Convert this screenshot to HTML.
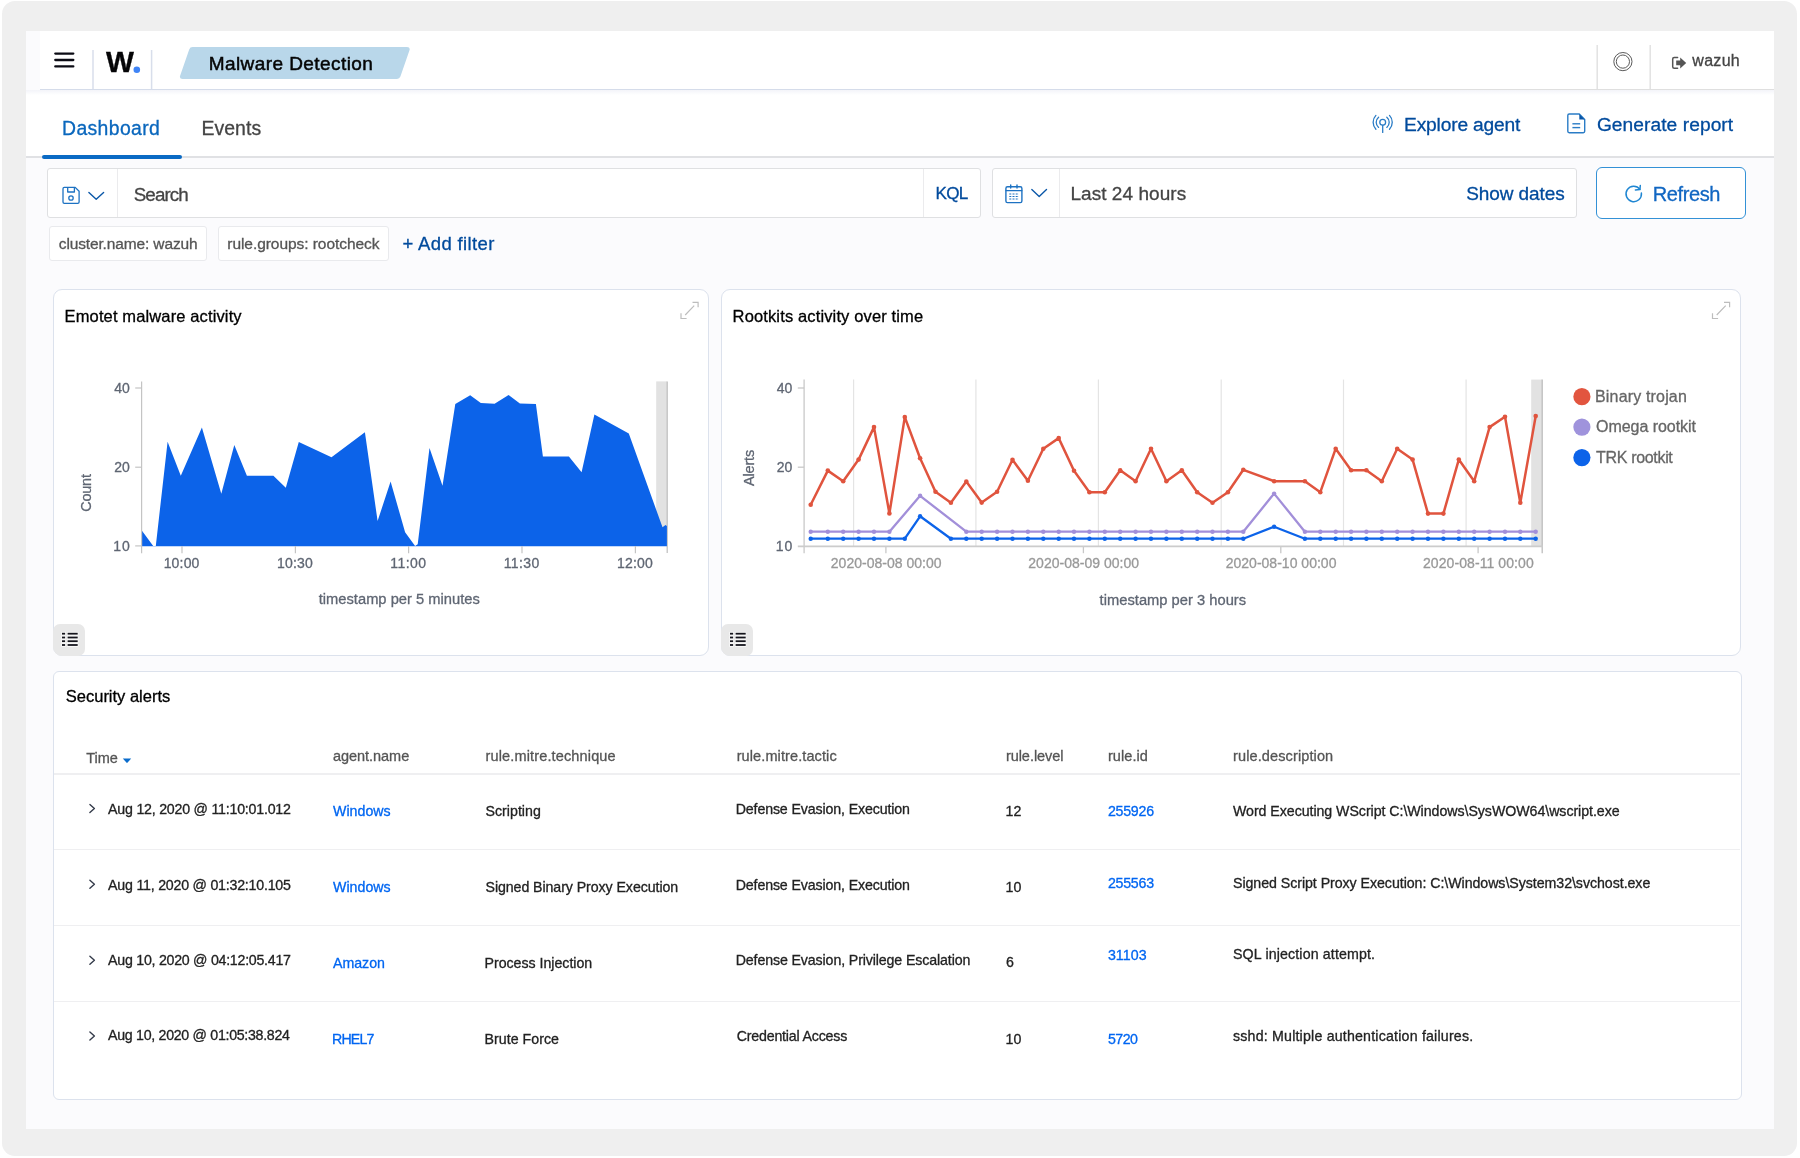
<!DOCTYPE html>
<html lang="en">
<head>
<meta charset="utf-8">
<title>Wazuh - Malware Detection</title>
<style>
*{box-sizing:border-box}
html,body{margin:0;padding:0;background:#fff}
body{width:1800px;height:1158px;overflow:hidden;font-family:"Liberation Sans",Arial,sans-serif;-webkit-font-smoothing:antialiased}
#root{position:relative;width:1800px;height:1158px;overflow:hidden;will-change:transform}
#root *{position:absolute}
#root header,#root nav,#root main,#root section,#root table,#root thead,#root tbody,#root tr,#root th,#root td,#root ul,#root li,#root button.plain,#root a.plain{position:static;display:block;margin:0;padding:0;border:0;background:none;font:inherit}
.t{white-space:pre;line-height:normal;margin:0;font-weight:400;-webkit-text-stroke:0.3px currentColor;font-family:"Liberation Sans",Arial,sans-serif}
svg{overflow:visible}
.frame{left:2px;top:1px;width:1795px;height:1155px;border-radius:13px;background:#efefef}
.page{left:26px;top:31.2px;width:1748px;height:1097.7px;background:#fbfbfd}
.hdr{left:40px;top:31.2px;width:1734px;height:58.8px;background:#fff}
.hdrline{left:40px;top:89px;width:1360px;height:1.2px;background:#d5dcea}
.hdrline2{left:1400px;top:89.2px;width:374px;height:1.6px;background:#dfdfdf}
.tabrow{left:26px;top:90.5px;width:1748px;height:67px;background:#fff}
.hshade{left:26px;top:90.2px;width:1748px;height:5px;background:linear-gradient(180deg,#f3f4f9,#ffffff)}
.tabline{left:26px;top:156.2px;width:1748px;height:1.8px;background:#e0e1e4}
.tabsel{left:42px;top:155.3px;width:140px;height:3.4px;border-radius:2px;background:#0a6ac4}
.box{background:#fff;border:1.2px solid #dfe0e2;border-radius:3px}
.vdiv{width:1.3px;background:#ebebed}
.pill{background:#fff;border:1.2px solid #e9eaed;border-radius:3px;top:226px;height:34.5px}
.btn{left:1596px;top:167px;width:150.2px;height:51.6px;background:#fff;border:1.6px solid #3391d6;border-radius:6px}
.panel{background:#fff;border:1.4px solid #dce2ed;border-radius:9px}
.lbtn{width:32px;height:32px;background:#e8e8e8;border-radius:7px 7px 7px 9px}
.rowline{left:54px;width:1686px;height:1.5px;background:#efeff1}
</style>
</head>
<body>
<div id="root">
<div class="frame"></div>
<div class="page"></div>

<header>
  <div class="hdr"></div>
  <div class="hdrline"></div>
  <div class="hdrline2"></div>
  <svg width="1800" height="100" style="left:0;top:0" viewBox="0 0 1800 100" aria-hidden="true">
    <g stroke="#0b0b14" stroke-width="2.3" stroke-linecap="round">
      <line x1="55.3" y1="53.6" x2="73.3" y2="53.6"/><line x1="55.3" y1="60" x2="73.3" y2="60"/><line x1="55.3" y1="66.4" x2="73.3" y2="66.4"/>
    </g>
    <g stroke="#d8deeb" stroke-width="1.5"><line x1="93" y1="50" x2="93" y2="89"/><line x1="151.6" y1="50" x2="151.6" y2="89"/></g>
    <circle cx="136.8" cy="69.8" r="3.3" fill="#3f84f6"/>
    <path d="M192.6 47 H407 Q410.6 47 409.4 50.4 L400.4 76.6 Q399.5 79 397 79 H182.6 Q179 79 180.2 75.6 L189.2 49.4 Q190 47 192.6 47 Z" fill="#b9d7ea"/>
    <g stroke="#e2e2e2" stroke-width="1.5"><line x1="1597.2" y1="45" x2="1597.2" y2="89"/><line x1="1650.2" y1="45" x2="1650.2" y2="89"/></g>
    <g fill="none" stroke="#5a5a5a" stroke-width="1"><circle cx="1622.9" cy="61.6" r="9.1"/><circle cx="1622.9" cy="61.6" r="6.6"/></g>
    <g fill="none" stroke="#555" stroke-width="1.5" stroke-linejoin="round" stroke-linecap="round">
      <path d="M1677.6 57.6 H1674.2 Q1672.7 57.6 1672.7 59.1 V66.7 Q1672.7 68.2 1674.2 68.2 H1677.6"/>
    </g>
    <path d="M1676.2 60.6 H1680.2 V57.4 L1686.2 62.9 L1680.2 68.4 V65.2 H1676.2 Z" fill="#555"/>
  </svg>
  <span class="t" style="font-size:29px;color:#050507;font-weight:700;left:106.10px;top:47.00px;transform:translateY(-0.6px) scaleX(1.02);transform-origin:0 50%;">W</span>
  <span class="t" style="font-size:19px;color:#050505;letter-spacing:0.425px;left:208.70px;top:53.00px;-webkit-text-stroke:0.5px #050505;">Malware Detection</span>
  <span class="t" style="font-size:16px;color:#444444;letter-spacing:0.300px;left:1692.30px;top:52.00px;">wazuh</span>
</header>

<nav>
  <div class="tabrow"></div>
  <div class="hshade"></div>
  <div class="tabline"></div>
  <div class="tabsel"></div>
  <a class="t" style="font-size:19.4px;color:#0a67bd;letter-spacing:0.375px;left:62.00px;top:117.00px;">Dashboard</a>
<a class="t" style="font-size:19.4px;color:#444444;letter-spacing:0.060px;left:201.50px;top:117.00px;">Events</a>
  <svg width="1800" height="60" style="left:0;top:100px" viewBox="0 100 1800 60" aria-hidden="true">
    <g fill="none" stroke="#2a7cc6" stroke-width="1.3" stroke-linecap="round">
      <circle cx="1382.7" cy="122.3" r="2.9"/>
      <line x1="1382.7" y1="125.3" x2="1382.7" y2="132.4"/>
      <path d="M1378.6 117.2 A6.6 6.6 0 0 0 1378.6 127.4"/><path d="M1386.8 117.2 A6.6 6.6 0 0 1 1386.8 127.4"/>
      <path d="M1375.9 115.4 A10 10 0 0 0 1375.9 129.2"/><path d="M1389.5 115.4 A10 10 0 0 1 1389.5 129.2"/>
    </g>
    <g fill="none" stroke="#2a7cc6" stroke-width="1.4" stroke-linejoin="round">
      <path d="M1579.3 114 H1569.2 Q1567.8 114 1567.8 115.4 V131.3 Q1567.8 132.7 1569.2 132.7 H1583.3 Q1584.7 132.7 1584.7 131.3 V119.4 Z"/>
      <line x1="1572.4" y1="123.8" x2="1580.2" y2="123.8"/><line x1="1572.4" y1="127.6" x2="1580.2" y2="127.6"/>
    </g>
    <path d="M1579.3 114 L1584.7 119.4 H1579.3 Z" fill="#0a57a8"/>
  </svg>
  <a class="t" style="font-size:19.2px;color:#004a9c;letter-spacing:-0.167px;left:1404.00px;top:114.00px;">Explore agent</a>
<a class="t" style="font-size:19.2px;color:#004a9c;letter-spacing:0.057px;left:1596.90px;top:114.00px;">Generate report</a>
</nav>

<main>
<section class="toolbar">
  <div class="box" style="left:46.6px;top:168px;width:934px;height:50.4px"></div>
  <div class="vdiv" style="left:117px;top:169px;height:48px"></div>
  <div class="vdiv" style="left:923px;top:169px;height:48px"></div>
  <div class="box" style="left:992px;top:168px;width:585px;height:50.4px"></div>
  <div class="vdiv" style="left:1059px;top:169px;height:48px"></div>
  <div class="btn"></div>
  <svg width="1800" height="60" style="left:0;top:165px" viewBox="0 165 1800 60" aria-hidden="true">
    <g fill="none" stroke="#1d72c2" stroke-width="1.3" stroke-linejoin="round">
      <path d="M64.3 187.4 H75.2 L79.1 191.3 V202 Q79.1 203.3 77.8 203.3 H64.3 Q63 203.3 63 202 V188.7 Q63 187.4 64.3 187.4 Z"/>
      <path d="M67.7 187.6 V192 H74.4 V187.6"/>
      <circle cx="71" cy="198" r="2.2"/>
    </g>
    <g fill="none" stroke="#0a57a8" stroke-width="1.4" stroke-linecap="round" stroke-linejoin="round">
      <path d="M88.9 192.4 L96.2 199.2 L103.6 192.4"/>
      <path d="M1031.8 189.6 L1039.2 196.4 L1046.5 189.6"/>
    </g>
    <g fill="none" stroke="#1d72c2" stroke-width="1.4" stroke-linejoin="round" stroke-linecap="round">
      <rect x="1005.9" y="186.8" width="16" height="15.8" rx="1.6"/>
      <line x1="1006" y1="190.6" x2="1021.8" y2="190.6"/>
      <line x1="1010.7" y1="185" x2="1010.7" y2="188"/><line x1="1017" y1="185" x2="1017" y2="188"/>
    </g>
    <g stroke="#1d72c2" stroke-width="1.2" stroke-dasharray="2 1.2">
      <line x1="1009.3" y1="194" x2="1019" y2="194"/><line x1="1009.3" y1="196.5" x2="1019" y2="196.5"/><line x1="1009.3" y1="199" x2="1019" y2="199"/>
    </g>
    <g fill="none" stroke="#1f86d2" stroke-width="1.5" stroke-linecap="round" stroke-linejoin="round">
      <path d="M1641.4 193.1 A7.7 7.7 0 1 1 1639.9 189.3"/>
      <path d="M1640.3 185.5 L1639.9 189.6 L1635.4 190"/>
    </g>
  </svg>
  <span class="t" style="font-size:18.8px;color:#444444;letter-spacing:-0.880px;left:133.70px;top:184.00px;">Search</span>
<span class="t" style="font-size:17.1px;color:#004a9c;letter-spacing:-0.750px;left:935.50px;top:184.00px;">KQL</span>
  <span class="t" style="font-size:19px;color:#444444;letter-spacing:0.058px;left:1070.40px;top:183.00px;">Last 24 hours</span>
<a class="t" style="font-size:19px;color:#004a9c;letter-spacing:-0.089px;left:1466.20px;top:183.00px;">Show dates</a>
  <span class="t" style="font-size:20px;color:#1066c2;letter-spacing:-0.400px;left:1652.80px;top:183.00px;">Refresh</span>
  <div class="pill" style="left:49px;width:157.8px"></div>
  <div class="pill" style="left:218.2px;width:170.6px"></div>
  <span class="t" style="font-size:15.5px;color:#555555;letter-spacing:-0.139px;left:58.80px;top:235.00px;">cluster.name: wazuh</span>
  <span class="t" style="font-size:15.5px;color:#555555;letter-spacing:-0.057px;left:227.30px;top:235.00px;">rule.groups: rootcheck</span>
  <a class="t" style="font-size:18.5px;color:#004a9c;letter-spacing:0.364px;left:402.40px;top:233.00px;">+ Add filter</a>
</section>

<section class="panel-emotet">
  <div class="panel" style="left:52.6px;top:289.1px;width:656.9px;height:367.1px"></div>
  <svg width="660" height="370" style="left:50px;top:288px" viewBox="50 288 660 370" aria-hidden="true">
    <rect x="656.2" y="381.4" width="11" height="164.6" fill="#e2e2e2"/>
    <line x1="667.2" y1="381.4" x2="667.2" y2="553" stroke="#bdbdbd" stroke-width="1.2"/>
    <polygon fill="#0c63e9" points="141.6,530.3 153.2,545.9 155.8,545.9 167.6,441.7 180.8,475.8 201.9,427.5 221.3,493.8 234.3,445.1 246.9,475.8 273.4,475.8 285.8,487.8 298.8,442.1 331.5,457.2 364.9,432.3 377.6,521.1 390.6,481.4 405.1,532.3 415.1,545.9 417.7,544.3 429.5,448.1 442.5,485.8 455.3,404.1 470.2,395.3 480.8,403.1 494.6,403.7 508.6,395.1 519.9,403.5 535.9,404.1 542.9,456.6 568.9,456.6 581.6,472.2 594.4,414.5 628.8,433.5 662.5,527.3 665.5,524.9 666.9,525.9 666.9,546.2 141.6,546.2"/>
    <g stroke="#c4c4c4" stroke-width="1.2" fill="none">
      <line x1="141.6" y1="381.6" x2="141.6" y2="553.2"/>
      <line x1="135.2" y1="388" x2="141.6" y2="388"/><line x1="135.2" y1="467.2" x2="141.6" y2="467.2"/><line x1="135.2" y1="545.9" x2="141.6" y2="545.9"/>
      <line x1="182" y1="546" x2="182" y2="553.2"/><line x1="295.4" y1="546" x2="295.4" y2="553.2"/><line x1="408.6" y1="546" x2="408.6" y2="553.2"/><line x1="522" y1="546" x2="522" y2="553.2"/><line x1="635.4" y1="546" x2="635.4" y2="553.2"/>
    </g>
    <g fill="none" stroke="#bdbdbd" stroke-width="1.2" stroke-linecap="butt" stroke-linejoin="miter">
      <path d="M685.2 315 L694.2 305.7 M692.5 302.3 H698.1 V307.2"/>
      <path d="M681.0 313.3 V318.5 H686.6"/>
    </g>
  </svg>
  <h2 class="t" style="font-size:16.5px;color:#000000;letter-spacing:0.127px;left:64.60px;top:307.00px;">Emotet malware activity</h2>
<span class="t" style="font-size:14px;color:#5f6673;left:114.20px;top:380.00px;">40</span>
<span class="t" style="font-size:14px;color:#5f6673;left:114.20px;top:459.00px;">20</span>
<span class="t" style="font-size:14px;color:#5f6673;letter-spacing:1.000px;left:113.20px;top:538.00px;">10</span>
<span class="t" style="font-size:14px;color:#5f6673;letter-spacing:0.175px;left:163.65px;top:555.00px;">10:00</span>
<span class="t" style="font-size:14px;color:#5f6673;letter-spacing:0.175px;left:277.05px;top:555.00px;">10:30</span>
<span class="t" style="font-size:14px;color:#5f6673;letter-spacing:0.425px;left:390.25px;top:555.00px;">11:00</span>
<span class="t" style="font-size:14px;color:#5f6673;letter-spacing:0.425px;left:503.65px;top:555.00px;">11:30</span>
<span class="t" style="font-size:14px;color:#5f6673;letter-spacing:0.175px;left:617.05px;top:555.00px;">12:00</span>
<span class="t" style="font-size:14.5px;color:#5f6673;letter-spacing:-0.250px;left:67.47px;top:484.87px;transform:rotate(-90deg);transform-origin:50% 50%;">Count</span>
<span class="t" style="font-size:14.7px;color:#5f6673;letter-spacing:0.014px;left:318.70px;top:591.00px;">timestamp per 5 minutes</span>
  <div class="lbtn" style="left:52.7px;top:623.9px"></div>
  <svg width="24" height="20" style="left:59.0px;top:630px" viewBox="59.0 630 24 20" aria-hidden="true"><g stroke="#fbfbfb" stroke-width="3.6"><line x1="61.4" y1="633.7" x2="65.7" y2="633.7"/><line x1="67.0" y1="633.7" x2="78.3" y2="633.7"/><line x1="61.4" y1="637.5" x2="65.7" y2="637.5"/><line x1="67.0" y1="637.5" x2="78.3" y2="637.5"/><line x1="61.4" y1="641.2" x2="65.7" y2="641.2"/><line x1="67.0" y1="641.2" x2="78.3" y2="641.2"/><line x1="61.4" y1="645.0" x2="65.7" y2="645.0"/><line x1="67.0" y1="645.0" x2="78.3" y2="645.0"/></g><g stroke="#14141c" stroke-width="1.8"><line x1="62.0" y1="633.7" x2="65.1" y2="633.7"/><line x1="67.6" y1="633.7" x2="77.7" y2="633.7"/><line x1="62.0" y1="637.5" x2="65.1" y2="637.5"/><line x1="67.6" y1="637.5" x2="77.7" y2="637.5"/><line x1="62.0" y1="641.2" x2="65.1" y2="641.2"/><line x1="67.6" y1="641.2" x2="77.7" y2="641.2"/><line x1="62.0" y1="645.0" x2="65.1" y2="645.0"/><line x1="67.6" y1="645.0" x2="77.7" y2="645.0"/></g></svg>
</section>

<section class="panel-rootkits">
  <div class="panel" style="left:721.4px;top:289.1px;width:1019.9px;height:367.1px"></div>
  <svg width="1024" height="370" style="left:719px;top:288px" viewBox="719 288 1024 370" aria-hidden="true">
    <rect x="1531.2" y="379.6" width="11" height="166.4" fill="#e2e2e2"/>
    <g stroke="#e4e4e4" stroke-width="1.2">
      <line x1="853.6" y1="379.6" x2="853.6" y2="546"/><line x1="975.9" y1="379.6" x2="975.9" y2="546"/><line x1="1098.4" y1="379.6" x2="1098.4" y2="546"/><line x1="1221.2" y1="379.6" x2="1221.2" y2="546"/><line x1="1343.5" y1="379.6" x2="1343.5" y2="546"/><line x1="1466.1" y1="379.6" x2="1466.1" y2="546"/>
    </g>
    <g stroke="#c8c8c8" stroke-width="1.3" fill="none">
      <line x1="804.1" y1="379.6" x2="804.1" y2="553.2"/>
      <line x1="797.8" y1="388" x2="804.1" y2="388"/><line x1="797.8" y1="467.2" x2="804.1" y2="467.2"/>
      <line x1="885.9" y1="546" x2="885.9" y2="553.2"/><line x1="1083.4" y1="546" x2="1083.4" y2="553.2"/><line x1="1280.8" y1="546" x2="1280.8" y2="553.2"/><line x1="1478.1" y1="546" x2="1478.1" y2="553.2"/>
      <line x1="1542.2" y1="379.6" x2="1542.2" y2="553.2" stroke="#bdbdbd"/>
    </g>
    <line x1="797.8" y1="546.4" x2="1542.8" y2="546.4" stroke="#cccccc" stroke-width="1.6"/>
    <polyline fill="none" stroke="#e0543e" stroke-width="2.5" stroke-linejoin="round" stroke-linecap="round" points="810.7,504.8 827.8,470.6 843.2,481.2 858.6,459.6 874.0,427.1 889.4,513.4 904.8,417.1 920.1,458.2 935.5,491.8 950.9,502.8 966.3,481.6 981.7,502.6 997.1,491.8 1012.5,459.8 1027.9,480.8 1043.3,448.7 1058.7,438.1 1074.0,470.8 1089.4,492.2 1104.8,492.2 1120.2,470.2 1135.6,481.2 1151.0,448.7 1166.4,481.2 1181.8,470.2 1197.2,492.2 1212.5,502.8 1227.9,492.2 1243.3,469.8 1274.1,481.2 1304.9,481.2 1320.3,492.2 1335.7,448.7 1351.1,470.2 1366.4,470.2 1381.8,481.2 1397.2,448.7 1412.6,459.6 1428.0,513.6 1443.4,513.6 1458.8,459.6 1474.2,481.2 1489.6,427.1 1505.0,416.7 1520.3,502.8 1535.7,416.1"/><g fill="#e0543e"><circle cx="810.7" cy="504.8" r="2.3"/><circle cx="827.8" cy="470.6" r="2.3"/><circle cx="843.2" cy="481.2" r="2.3"/><circle cx="858.6" cy="459.6" r="2.3"/><circle cx="874.0" cy="427.1" r="2.3"/><circle cx="889.4" cy="513.4" r="2.3"/><circle cx="904.8" cy="417.1" r="2.3"/><circle cx="920.1" cy="458.2" r="2.3"/><circle cx="935.5" cy="491.8" r="2.3"/><circle cx="950.9" cy="502.8" r="2.3"/><circle cx="966.3" cy="481.6" r="2.3"/><circle cx="981.7" cy="502.6" r="2.3"/><circle cx="997.1" cy="491.8" r="2.3"/><circle cx="1012.5" cy="459.8" r="2.3"/><circle cx="1027.9" cy="480.8" r="2.3"/><circle cx="1043.3" cy="448.7" r="2.3"/><circle cx="1058.7" cy="438.1" r="2.3"/><circle cx="1074.0" cy="470.8" r="2.3"/><circle cx="1089.4" cy="492.2" r="2.3"/><circle cx="1104.8" cy="492.2" r="2.3"/><circle cx="1120.2" cy="470.2" r="2.3"/><circle cx="1135.6" cy="481.2" r="2.3"/><circle cx="1151.0" cy="448.7" r="2.3"/><circle cx="1166.4" cy="481.2" r="2.3"/><circle cx="1181.8" cy="470.2" r="2.3"/><circle cx="1197.2" cy="492.2" r="2.3"/><circle cx="1212.5" cy="502.8" r="2.3"/><circle cx="1227.9" cy="492.2" r="2.3"/><circle cx="1243.3" cy="469.8" r="2.3"/><circle cx="1274.1" cy="481.2" r="2.3"/><circle cx="1304.9" cy="481.2" r="2.3"/><circle cx="1320.3" cy="492.2" r="2.3"/><circle cx="1335.7" cy="448.7" r="2.3"/><circle cx="1351.1" cy="470.2" r="2.3"/><circle cx="1366.4" cy="470.2" r="2.3"/><circle cx="1381.8" cy="481.2" r="2.3"/><circle cx="1397.2" cy="448.7" r="2.3"/><circle cx="1412.6" cy="459.6" r="2.3"/><circle cx="1428.0" cy="513.6" r="2.3"/><circle cx="1443.4" cy="513.6" r="2.3"/><circle cx="1458.8" cy="459.6" r="2.3"/><circle cx="1474.2" cy="481.2" r="2.3"/><circle cx="1489.6" cy="427.1" r="2.3"/><circle cx="1505.0" cy="416.7" r="2.3"/><circle cx="1520.3" cy="502.8" r="2.3"/><circle cx="1535.7" cy="416.1" r="2.3"/></g><polyline fill="none" stroke="#a28fd9" stroke-width="2.3" stroke-linejoin="round" stroke-linecap="round" points="810.7,531.7 827.8,531.7 843.2,531.7 858.6,531.7 874.0,531.7 889.4,531.7 920.1,495.8 966.3,531.7 981.7,531.7 997.1,531.7 1012.5,531.7 1027.9,531.7 1043.3,531.7 1058.7,531.7 1074.0,531.7 1089.4,531.7 1104.8,531.7 1120.2,531.7 1135.6,531.7 1151.0,531.7 1166.4,531.7 1181.8,531.7 1197.2,531.7 1212.5,531.7 1227.9,531.7 1243.3,531.7 1274.1,493.6 1304.9,531.7 1320.3,531.7 1335.7,531.7 1351.1,531.7 1366.4,531.7 1381.8,531.7 1397.2,531.7 1412.6,531.7 1428.0,531.7 1443.4,531.7 1458.8,531.7 1474.2,531.7 1489.6,531.7 1505.0,531.7 1520.3,531.7 1535.7,531.7"/><g fill="#a28fd9"><circle cx="810.7" cy="531.7" r="2.2"/><circle cx="827.8" cy="531.7" r="2.2"/><circle cx="843.2" cy="531.7" r="2.2"/><circle cx="858.6" cy="531.7" r="2.2"/><circle cx="874.0" cy="531.7" r="2.2"/><circle cx="889.4" cy="531.7" r="2.2"/><circle cx="920.1" cy="495.8" r="2.2"/><circle cx="966.3" cy="531.7" r="2.2"/><circle cx="981.7" cy="531.7" r="2.2"/><circle cx="997.1" cy="531.7" r="2.2"/><circle cx="1012.5" cy="531.7" r="2.2"/><circle cx="1027.9" cy="531.7" r="2.2"/><circle cx="1043.3" cy="531.7" r="2.2"/><circle cx="1058.7" cy="531.7" r="2.2"/><circle cx="1074.0" cy="531.7" r="2.2"/><circle cx="1089.4" cy="531.7" r="2.2"/><circle cx="1104.8" cy="531.7" r="2.2"/><circle cx="1120.2" cy="531.7" r="2.2"/><circle cx="1135.6" cy="531.7" r="2.2"/><circle cx="1151.0" cy="531.7" r="2.2"/><circle cx="1166.4" cy="531.7" r="2.2"/><circle cx="1181.8" cy="531.7" r="2.2"/><circle cx="1197.2" cy="531.7" r="2.2"/><circle cx="1212.5" cy="531.7" r="2.2"/><circle cx="1227.9" cy="531.7" r="2.2"/><circle cx="1243.3" cy="531.7" r="2.2"/><circle cx="1274.1" cy="493.6" r="2.2"/><circle cx="1304.9" cy="531.7" r="2.2"/><circle cx="1320.3" cy="531.7" r="2.2"/><circle cx="1335.7" cy="531.7" r="2.2"/><circle cx="1351.1" cy="531.7" r="2.2"/><circle cx="1366.4" cy="531.7" r="2.2"/><circle cx="1381.8" cy="531.7" r="2.2"/><circle cx="1397.2" cy="531.7" r="2.2"/><circle cx="1412.6" cy="531.7" r="2.2"/><circle cx="1428.0" cy="531.7" r="2.2"/><circle cx="1443.4" cy="531.7" r="2.2"/><circle cx="1458.8" cy="531.7" r="2.2"/><circle cx="1474.2" cy="531.7" r="2.2"/><circle cx="1489.6" cy="531.7" r="2.2"/><circle cx="1505.0" cy="531.7" r="2.2"/><circle cx="1520.3" cy="531.7" r="2.2"/><circle cx="1535.7" cy="531.7" r="2.2"/></g><polyline fill="none" stroke="#0c63e9" stroke-width="2.3" stroke-linejoin="round" stroke-linecap="round" points="810.7,538.7 827.8,538.7 843.2,538.7 858.6,538.7 874.0,538.7 889.4,538.7 904.8,538.7 920.1,516.3 950.9,538.7 966.3,538.7 981.7,538.7 997.1,538.7 1012.5,538.7 1027.9,538.7 1043.3,538.7 1058.7,538.7 1074.0,538.7 1089.4,538.7 1104.8,538.7 1120.2,538.7 1135.6,538.7 1151.0,538.7 1166.4,538.7 1181.8,538.7 1197.2,538.7 1212.5,538.7 1227.9,538.7 1243.3,538.7 1274.1,526.7 1304.9,538.7 1320.3,538.7 1335.7,538.7 1351.1,538.7 1366.4,538.7 1381.8,538.7 1397.2,538.7 1412.6,538.7 1428.0,538.7 1443.4,538.7 1458.8,538.7 1474.2,538.7 1489.6,538.7 1505.0,538.7 1520.3,538.7 1535.7,538.7"/><g fill="#0c63e9"><circle cx="810.7" cy="538.7" r="2.2"/><circle cx="827.8" cy="538.7" r="2.2"/><circle cx="843.2" cy="538.7" r="2.2"/><circle cx="858.6" cy="538.7" r="2.2"/><circle cx="874.0" cy="538.7" r="2.2"/><circle cx="889.4" cy="538.7" r="2.2"/><circle cx="904.8" cy="538.7" r="2.2"/><circle cx="920.1" cy="516.3" r="2.2"/><circle cx="950.9" cy="538.7" r="2.2"/><circle cx="966.3" cy="538.7" r="2.2"/><circle cx="981.7" cy="538.7" r="2.2"/><circle cx="997.1" cy="538.7" r="2.2"/><circle cx="1012.5" cy="538.7" r="2.2"/><circle cx="1027.9" cy="538.7" r="2.2"/><circle cx="1043.3" cy="538.7" r="2.2"/><circle cx="1058.7" cy="538.7" r="2.2"/><circle cx="1074.0" cy="538.7" r="2.2"/><circle cx="1089.4" cy="538.7" r="2.2"/><circle cx="1104.8" cy="538.7" r="2.2"/><circle cx="1120.2" cy="538.7" r="2.2"/><circle cx="1135.6" cy="538.7" r="2.2"/><circle cx="1151.0" cy="538.7" r="2.2"/><circle cx="1166.4" cy="538.7" r="2.2"/><circle cx="1181.8" cy="538.7" r="2.2"/><circle cx="1197.2" cy="538.7" r="2.2"/><circle cx="1212.5" cy="538.7" r="2.2"/><circle cx="1227.9" cy="538.7" r="2.2"/><circle cx="1243.3" cy="538.7" r="2.2"/><circle cx="1274.1" cy="526.7" r="2.2"/><circle cx="1304.9" cy="538.7" r="2.2"/><circle cx="1320.3" cy="538.7" r="2.2"/><circle cx="1335.7" cy="538.7" r="2.2"/><circle cx="1351.1" cy="538.7" r="2.2"/><circle cx="1366.4" cy="538.7" r="2.2"/><circle cx="1381.8" cy="538.7" r="2.2"/><circle cx="1397.2" cy="538.7" r="2.2"/><circle cx="1412.6" cy="538.7" r="2.2"/><circle cx="1428.0" cy="538.7" r="2.2"/><circle cx="1443.4" cy="538.7" r="2.2"/><circle cx="1458.8" cy="538.7" r="2.2"/><circle cx="1474.2" cy="538.7" r="2.2"/><circle cx="1489.6" cy="538.7" r="2.2"/><circle cx="1505.0" cy="538.7" r="2.2"/><circle cx="1520.3" cy="538.7" r="2.2"/><circle cx="1535.7" cy="538.7" r="2.2"/></g>
    <g fill="none" stroke="#bdbdbd" stroke-width="1.2" stroke-linecap="butt" stroke-linejoin="miter">
      <path d="M1716.7 315 L1725.7 305.7 M1724.0 302.3 H1729.6 V307.2"/>
      <path d="M1712.5 313.3 V318.5 H1718.1"/>
    </g>
    <circle cx="1581.9" cy="396.7" r="8.6" fill="#e2553f"/><circle cx="1581.9" cy="427.1" r="8.6" fill="#9f93dc"/><circle cx="1581.9" cy="457.6" r="8.6" fill="#0c63e9"/>
  </svg>
  <h2 class="t" style="font-size:16.5px;color:#000000;letter-spacing:0.135px;left:732.60px;top:307.00px;">Rootkits activity over time</h2>
<span class="t" style="font-size:14px;color:#5f6673;left:776.80px;top:380.00px;">40</span>
<span class="t" style="font-size:14px;color:#5f6673;left:776.80px;top:459.00px;">20</span>
<span class="t" style="font-size:14px;color:#5f6673;letter-spacing:1.000px;left:775.80px;top:538.00px;">10</span>
<span class="t" style="font-size:14px;color:#999999;letter-spacing:0.013px;left:830.80px;top:555.00px;">2020-08-08 00:00</span>
<span class="t" style="font-size:14px;color:#999999;letter-spacing:0.013px;left:1028.30px;top:555.00px;">2020-08-09 00:00</span>
<span class="t" style="font-size:14px;color:#999999;letter-spacing:0.013px;left:1225.70px;top:555.00px;">2020-08-10 00:00</span>
<span class="t" style="font-size:14px;color:#999999;letter-spacing:0.080px;left:1423.00px;top:555.00px;">2020-08-11 00:00</span>
<span class="t" style="font-size:14.5px;color:#5f6673;letter-spacing:-0.140px;left:731.47px;top:459.73px;transform:rotate(-90deg);transform-origin:50% 50%;">Alerts</span>
<span class="t" style="font-size:14.7px;color:#5f6673;letter-spacing:0.020px;left:1099.60px;top:592.00px;">timestamp per 3 hours</span>
  <ul class="legend">
  <li><span class="t" style="font-size:16px;color:#666666;letter-spacing:0.167px;left:1595.00px;top:388.00px;">Binary trojan</span></li>
<li><span class="t" style="font-size:16px;color:#666666;letter-spacing:-0.042px;left:1596.00px;top:418.00px;">Omega rootkit</span></li>
<li><span class="t" style="font-size:16px;color:#666666;letter-spacing:-0.320px;left:1596.00px;top:449.00px;">TRK rootkit</span></li>
  </ul>
  <div class="lbtn" style="left:720.9px;top:623.9px"></div>
  <svg width="24" height="20" style="left:726.9px;top:630px" viewBox="726.9 630 24 20" aria-hidden="true"><g stroke="#fbfbfb" stroke-width="3.6"><line x1="729.2" y1="633.7" x2="733.6" y2="633.7"/><line x1="734.9" y1="633.7" x2="746.1" y2="633.7"/><line x1="729.2" y1="637.5" x2="733.6" y2="637.5"/><line x1="734.9" y1="637.5" x2="746.1" y2="637.5"/><line x1="729.2" y1="641.2" x2="733.6" y2="641.2"/><line x1="734.9" y1="641.2" x2="746.1" y2="641.2"/><line x1="729.2" y1="645.0" x2="733.6" y2="645.0"/><line x1="734.9" y1="645.0" x2="746.1" y2="645.0"/></g><g stroke="#14141c" stroke-width="1.8"><line x1="729.9" y1="633.7" x2="733.0" y2="633.7"/><line x1="735.5" y1="633.7" x2="745.6" y2="633.7"/><line x1="729.9" y1="637.5" x2="733.0" y2="637.5"/><line x1="735.5" y1="637.5" x2="745.6" y2="637.5"/><line x1="729.9" y1="641.2" x2="733.0" y2="641.2"/><line x1="735.5" y1="641.2" x2="745.6" y2="641.2"/><line x1="729.9" y1="645.0" x2="733.0" y2="645.0"/><line x1="735.5" y1="645.0" x2="745.6" y2="645.0"/></g></svg>
</section>

<section class="panel-alerts">
  <div class="panel" style="left:52.5px;top:671px;width:1689px;height:428.5px;border-radius:6px"></div>
  <h2 class="t" style="font-size:16.5px;color:#000000;letter-spacing:-0.007px;left:65.80px;top:687.00px;">Security alerts</h2>
  <div class="rowline" style="top:773px"></div>
  <div class="rowline" style="top:848.8px"></div>
  <div class="rowline" style="top:924.6px"></div>
  <div class="rowline" style="top:1000.5px"></div>
  <svg width="60" height="300" style="left:80px;top:750px" viewBox="80 750 60 300" aria-hidden="true">
    <path d="M122.8 758.6 H131.2 L127.6 762.6 Q127 763.2 126.4 762.6 Z" fill="#0a6ccc"/>
    <g fill="none" stroke="#343b4a" stroke-width="1.4" stroke-linecap="round" stroke-linejoin="round">
      <path d="M89.9 804.6 L94.4 808.6 L89.9 812.6"/>
      <path d="M89.9 880.3 L94.4 884.3 L89.9 888.3"/>
      <path d="M89.9 956.3 L94.4 960.3 L89.9 964.3"/>
      <path d="M89.9 1032 L94.4 1036 L89.9 1040"/>
    </g>
  </svg>
  <table>
    <thead><tr>
    <th><span class="t" style="font-size:14.5px;color:#555555;letter-spacing:-0.067px;left:86.30px;top:750.00px;">Time</span></th>
<th><span class="t" style="font-size:14.5px;color:#555555;letter-spacing:-0.044px;left:333.00px;top:748.00px;">agent.name</span></th>
<th><span class="t" style="font-size:14.5px;color:#555555;letter-spacing:0.147px;left:485.50px;top:748.00px;">rule.mitre.technique</span></th>
<th><span class="t" style="font-size:14.5px;color:#555555;letter-spacing:0.106px;left:736.70px;top:748.00px;">rule.mitre.tactic</span></th>
<th><span class="t" style="font-size:14.5px;color:#555555;letter-spacing:-0.044px;left:1005.90px;top:748.00px;">rule.level</span></th>
<th><span class="t" style="font-size:14.5px;color:#555555;letter-spacing:0.083px;left:1107.90px;top:748.00px;">rule.id</span></th>
<th><span class="t" style="font-size:14.5px;color:#555555;letter-spacing:0.113px;left:1233.10px;top:748.00px;">rule.description</span></th>
    </tr></thead>
    <tbody>
    <tr>
    <td><span class="t" style="font-size:14.2px;color:#222222;letter-spacing:-0.219px;left:108.10px;top:801.00px;">Aug 12, 2020 @ 11:10:01.012</span></td>
<td><a class="t" style="font-size:14.2px;color:#0066f2;letter-spacing:0.017px;left:333.00px;top:803.00px;">Windows</a></td>
<td><span class="t" style="font-size:14.2px;color:#222222;letter-spacing:0.013px;left:485.50px;top:803.00px;">Scripting</span></td>
<td><span class="t" style="font-size:14.2px;color:#222222;letter-spacing:-0.128px;left:735.70px;top:801.00px;">Defense Evasion, Execution</span></td>
<td><span class="t" style="font-size:14.2px;color:#222222;letter-spacing:0.100px;left:1005.50px;top:803.00px;">12</span></td>
<td><a class="t" style="font-size:14.2px;color:#0066f2;letter-spacing:-0.240px;left:1107.90px;top:803.00px;">255926</a></td>
<td><span class="t" style="font-size:14.2px;color:#222222;letter-spacing:-0.049px;left:1233.00px;top:803.00px;">Word Executing WScript C:\Windows\SysWOW64\wscript.exe</span></td>
    </tr>
    <tr>
    <td><span class="t" style="font-size:14.2px;color:#222222;letter-spacing:-0.219px;left:108.10px;top:877.00px;">Aug 11, 2020 @ 01:32:10.105</span></td>
<td><a class="t" style="font-size:14.2px;color:#0066f2;letter-spacing:0.017px;left:333.00px;top:879.00px;">Windows</a></td>
<td><span class="t" style="font-size:14.2px;color:#222222;letter-spacing:-0.075px;left:485.50px;top:879.00px;">Signed Binary Proxy Execution</span></td>
<td><span class="t" style="font-size:14.2px;color:#222222;letter-spacing:-0.128px;left:735.70px;top:877.00px;">Defense Evasion, Execution</span></td>
<td><span class="t" style="font-size:14.2px;color:#222222;letter-spacing:0.100px;left:1005.50px;top:879.00px;">10</span></td>
<td><a class="t" style="font-size:14.2px;color:#0066f2;letter-spacing:-0.240px;left:1107.90px;top:875.00px;">255563</a></td>
<td><span class="t" style="font-size:14.2px;color:#222222;letter-spacing:-0.049px;left:1233.00px;top:875.00px;">Signed Script Proxy Execution: C:\Windows\System32\svchost.exe</span></td>
    </tr>
    <tr>
    <td><span class="t" style="font-size:14.2px;color:#222222;letter-spacing:-0.258px;left:108.10px;top:952.00px;">Aug 10, 2020 @ 04:12:05.417</span></td>
<td><a class="t" style="font-size:14.2px;color:#0066f2;letter-spacing:-0.020px;left:333.00px;top:955.00px;">Amazon</a></td>
<td><span class="t" style="font-size:14.2px;color:#222222;letter-spacing:-0.019px;left:484.50px;top:955.00px;">Process Injection</span></td>
<td><span class="t" style="font-size:14.2px;color:#222222;letter-spacing:-0.119px;left:735.70px;top:952.00px;">Defense Evasion, Privilege Escalation</span></td>
<td><span class="t" style="font-size:14.2px;color:#222222;left:1005.90px;top:954.00px;">6</span></td>
<td><a class="t" style="font-size:14.2px;color:#0066f2;letter-spacing:0.075px;left:1107.90px;top:947.00px;">31103</a></td>
<td><span class="t" style="font-size:14.2px;color:#222222;letter-spacing:0.143px;left:1233.00px;top:946.00px;">SQL injection attempt.</span></td>
    </tr>
    <tr>
    <td><span class="t" style="font-size:14.2px;color:#222222;letter-spacing:-0.296px;left:108.10px;top:1027.00px;">Aug 10, 2020 @ 01:05:38.824</span></td>
<td><a class="t" style="font-size:14.2px;color:#0066f2;letter-spacing:-0.850px;left:332.00px;top:1031.00px;">RHEL7</a></td>
<td><span class="t" style="font-size:14.2px;color:#222222;letter-spacing:0.030px;left:484.50px;top:1031.00px;">Brute Force</span></td>
<td><span class="t" style="font-size:14.2px;color:#222222;letter-spacing:-0.188px;left:736.70px;top:1028.00px;">Credential Access</span></td>
<td><span class="t" style="font-size:14.2px;color:#222222;letter-spacing:0.100px;left:1005.50px;top:1031.00px;">10</span></td>
<td><a class="t" style="font-size:14.2px;color:#0066f2;letter-spacing:-0.500px;left:1107.90px;top:1031.00px;">5720</a></td>
<td><span class="t" style="font-size:14.2px;color:#222222;letter-spacing:0.197px;left:1233.00px;top:1028.00px;">sshd: Multiple authentication failures.</span></td>
    </tr>
    </tbody>
  </table>
</section>
</main>
</div>
</body>
</html>
